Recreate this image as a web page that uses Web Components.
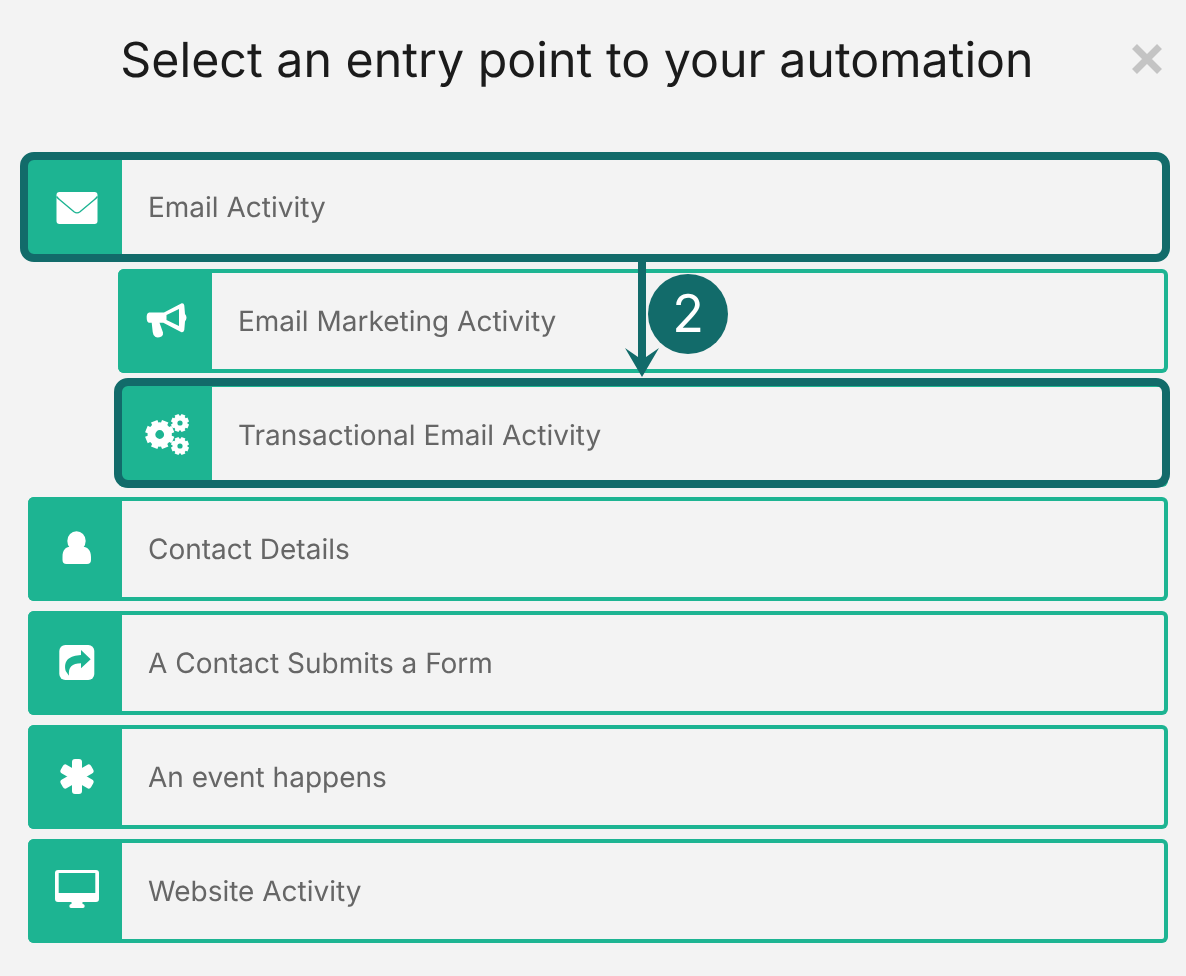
<!DOCTYPE html>
<html lang="en">
<head>
<meta charset="utf-8">
<title>Select an entry point</title>
<style>
  html, body { margin: 0; background: #f3f3f3; }
</style>
</head>
<body>
<entry-dialog>
  <span slot="title">Select an entry point to your automation</span>

  <entry-item>
    <svg slot="icon" width="94" height="104" viewBox="0 0 94 104">
      <rect x="28.5" y="37" width="41" height="32" rx="3" fill="#fff"/>
      <path d="M28.5 41.5 Q30 43.5 32 45 L46 56.8 Q49 59 52 56.8 L66 45 Q68 43.5 69.5 41.5" fill="none" stroke="#1db492" stroke-width="1.4"/>
    </svg>
    Email Activity
    <focus-ring slot="overlay" style="--l:-8px;--t:-7px;--r:-6px;--b:-7px"></focus-ring>
  </entry-item>

  <entry-item nested>
    <svg slot="icon" width="94" height="104" viewBox="0 0 94 104">
      <path fill="#fff" fill-rule="evenodd" d="M31 43.5 H46 L63.7 34.3 Q66 34 66.3 36.5 L67 45 Q70 48.7 67 52.500 L66.3 61 Q65.5 63.8 63 63 L45.3 53.7 H41.5 L45 63.5 Q45.5 66 43.5 67.5 Q40 69 37.5 68 Q35 66.5 34.7 63 L33.7 53.7 H31 Q28.7 53 28.7 49 V47 Q28.7 44 31 43.5 Z M48.500 46 V51 L61 57 V40 Z"/>
    </svg>
    Email Marketing Activity
  </entry-item>

  <entry-item nested>
    <svg slot="icon" width="94" height="104" viewBox="0 0 94 104">
      <path id="gears" fill="#fff" fill-rule="evenodd"/>
    </svg>
    Transactional Email Activity
    <focus-ring slot="overlay" style="--l:-4px;--t:-9px;--r:-6px;--b:-5px"></focus-ring>
  </entry-item>

  <entry-item>
    <svg slot="icon" width="94" height="104" viewBox="0 0 94 104">
      <ellipse cx="48.5" cy="44" rx="9.200" ry="9.800" fill="#fff"/>
      <path fill="#fff" d="M34.500 60 C34.500 53 37.500 50 42 49.700 Q48.500 55 55 49.700 C59.500 50 63 53 63 60 V63 Q63 67 59 67 H38.500 Q34.500 67 34.500 63 Z"/>
    </svg>
    Contact Details
  </entry-item>

  <entry-item>
    <svg slot="icon" width="94" height="104" viewBox="0 0 94 104">
      <rect x="31.300" y="34" width="35" height="35" rx="6" fill="#fff"/>
      <path fill="#1db492" d="M62.7 48.3 L53 39 V44 C42 44.500 35 49 37.700 60 L41 64.700 C40 56 44 52.500 53 52.300 V57.300 Z"/>
    </svg>
    A Contact Submits a Form
  </entry-item>

  <entry-item>
    <svg slot="icon" width="94" height="104" viewBox="0 0 94 104">
      <g fill="#fff">
        <rect x="44" y="34" width="10" height="35" rx="3"/>
        <rect x="44" y="34" width="10" height="35" rx="3" transform="rotate(60 49 51.500)"/>
        <rect x="44" y="34" width="10" height="35" rx="3" transform="rotate(-60 49 51.500)"/>
      </g>
    </svg>
    An event happens
  </entry-item>

  <entry-item>
    <svg slot="icon" width="94" height="104" viewBox="0 0 94 104">
      <path fill="#fff" fill-rule="evenodd" d="M30 31 H68 Q71 31 71 34 V60 Q71 63 68 63 H54.500 V65 H55 Q56.700 65.500 56.700 67 Q56.700 69 55 69 H43 Q41.300 69 41.300 67 Q41.300 65.500 43 65 H43.500 V63 H30 Q27 63 27 60 V34 Q27 31 30 31 Z M30.700 34 V54 H67.300 V34 Z"/>
    </svg>
    Website Activity
  </entry-item>

  <step-arrow slot="overlay" number="2"></step-arrow>
</entry-dialog>

<script>
  // toothed wheel as a path, hole cut out with evenodd
  function gearPath(cx, cy, r, hole, teeth) {
    const inner = r * 0.82;
    const step = Math.PI * 2 / teeth;
    let d = '';
    for (let i = 0; i < teeth; i++) {
      const a = i * step + step / 2;
      const pts = [
        [inner, a - step * 0.5], [inner, a - step * 0.36],
        [r, a - step * 0.3], [r, a + step * 0.3],
        [inner, a + step * 0.36]
      ];
      for (const [rad, ang] of pts) {
        const x = (cx + rad * Math.cos(ang)).toFixed(2);
        const y = (cy + rad * Math.sin(ang)).toFixed(2);
        d += (d ? 'L' : 'M') + x + ' ' + y + ' ';
      }
    }
    d += 'Z M' + (cx + hole) + ' ' + cy +
      ' a' + hole + ' ' + hole + ' 0 1 0 ' + (-hole * 2) + ' 0' +
      ' a' + hole + ' ' + hole + ' 0 1 0 ' + (hole * 2) + ' 0 Z';
    return d;
  }
  document.getElementById('gears').setAttribute('d',
    gearPath(41.7, 51.5, 14.8, 4.4, 8) + ' ' +
    gearPath(62, 40, 9.2, 2.6, 8) + ' ' +
    gearPath(62, 63, 9.2, 2.6, 8));

  class EntryDialog extends HTMLElement {
    constructor() {
      super();
      this.attachShadow({ mode: 'open' });
      this.shadowRoot.innerHTML = `
        <style>
          :host {
            display: block;
            position: relative;
            width: 1186px;
            height: 976px;
            box-sizing: border-box;
            padding: 0 18px 0 28px;
            background: #f3f3f3;
            font-family: Inter, "Liberation Sans", sans-serif;
            text-rendering: geometricPrecision;
          }
          header {
            height: 155px;
            box-sizing: border-box;
            padding: 31px 0 0;
            margin-right: 42px;
            text-align: center;
            font-size: 48.3px;
            line-height: 58px;
            color: #1b1b1b;
            will-change: opacity;
          }
          .list {
            display: flex;
            flex-direction: column;
            gap: 10px;
          }
          .close {
            position: absolute;
            left: 1131px;
            top: 43px;
          }
        </style>
        <header><slot name="title"></slot></header>
        <svg class="close" width="32" height="32" viewBox="0 0 32 32">
          <path d="M3.500 3.500 L28.500 28.500 M28.500 3.500 L3.500 28.500" stroke="#c4c4c4" stroke-width="7"/>
        </svg>
        <div class="list"><slot></slot></div>
        <slot name="overlay"></slot>
      `;
    }
  }

  class EntryItem extends HTMLElement {
    constructor() {
      super();
      this.attachShadow({ mode: 'open' });
      this.shadowRoot.innerHTML = `
        <style>
          :host {
            display: flex;
            position: relative;
            height: 104px;
            box-sizing: border-box;
            border: 4px solid #1db492;
            border-left: 0;
            border-radius: 6px;
          }
          :host([nested]) {
            margin-left: 90px;
          }
          .icon {
            flex: none;
            width: 94px;
            margin: -4px 0;
            background: #1db492;
            border-radius: 6px 0 0 6px;
          }
          .icon ::slotted(svg) {
            display: block;
          }
          .label {
            display: flex;
            align-items: center;
            padding-left: 26px;
            font-size: 28px;
            color: #666;
            will-change: opacity;
          }
        </style>
        <div class="icon"><slot name="icon"></slot></div>
        <div class="label"><slot></slot></div>
        <slot name="overlay"></slot>
      `;
    }
  }

  // dark outline laid over the row it marks
  class FocusRing extends HTMLElement {
    constructor() {
      super();
      this.attachShadow({ mode: 'open' });
      this.shadowRoot.innerHTML = `
        <style>
          :host {
            position: absolute;
            left: var(--l);
            top: var(--t);
            right: var(--r);
            bottom: var(--b);
            box-sizing: border-box;
            border: 8px solid #126b6a;
            border-radius: 14px;
          }
        </style>
      `;
    }
  }

  class StepArrow extends HTMLElement {
    constructor() {
      super();
      this.attachShadow({ mode: 'open' });
      this.shadowRoot.innerHTML = `
        <style>
          :host {
            position: absolute;
            left: 625px;
            top: 258px;
            width: 104px;
            height: 120px;
          }
          svg {
            position: absolute;
            left: 0;
            top: 0;
          }
          .badge {
            position: absolute;
            left: 23px;
            top: 16px;
            width: 80px;
            height: 80px;
            border-radius: 50%;
            background: #126b6a;
            color: #fff;
            display: flex;
            align-items: center;
            justify-content: center;
            font-size: 52px;
            line-height: 84px;
            font-family: Inter, "Liberation Sans", sans-serif;
          }
        </style>
        <svg width="36" height="120" viewBox="0 0 36 120">
          <path fill="#126b6a" d="M13 0 H21 V99 L34 90 L17 119 L0 90 L13 99 Z"/>
        </svg>
        <div class="badge">${this.getAttribute('number')}</div>
      `;
    }
  }

  customElements.define('entry-dialog', EntryDialog);
  customElements.define('entry-item', EntryItem);
  customElements.define('focus-ring', FocusRing);
  customElements.define('step-arrow', StepArrow);
</script>
</body>
</html>
